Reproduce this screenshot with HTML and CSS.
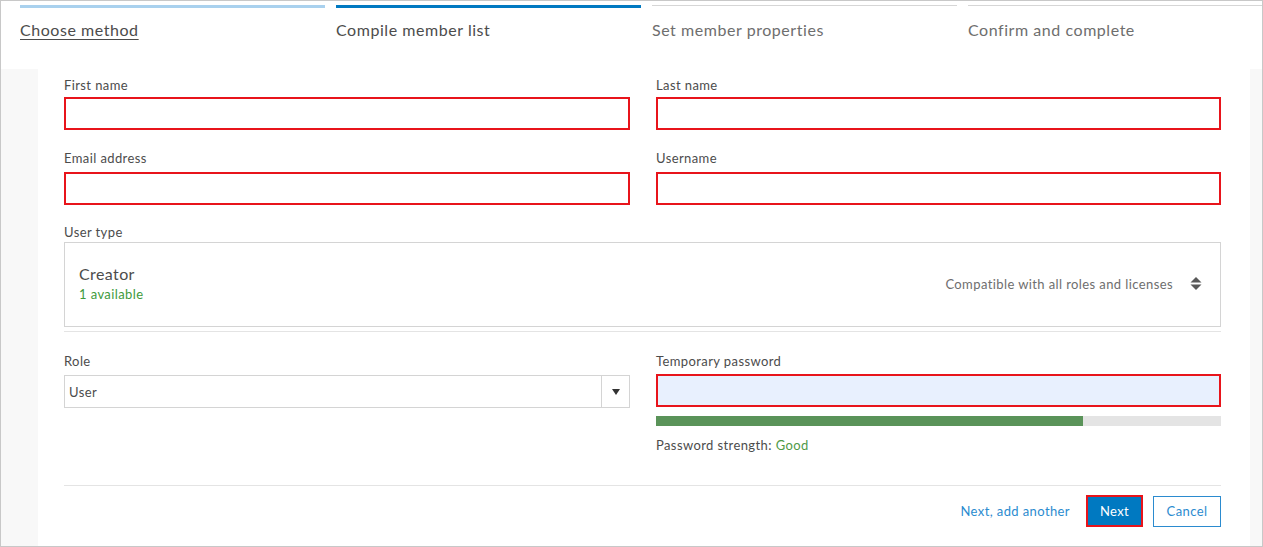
FILE: index.html
```html
<!DOCTYPE html>
<html lang="en">
<head>
<meta charset="utf-8">
<title>Add members</title>
<link rel="stylesheet" href="styles.css">
</head>
<body>
<div class="frame">
  <header class="steps">
    <div class="step step-done"><span class="step-bar"></span><a class="step-label" href="#">Choose method</a></div>
    <div class="step step-active"><span class="step-bar"></span><span class="step-label">Compile member list</span></div>
    <div class="step"><span class="step-bar"></span><span class="step-label">Set member properties</span></div>
    <div class="step step-last"><span class="step-bar"></span><span class="step-label">Confirm and complete</span></div>
  </header>
  <div class="body">
    <div class="gutter"></div>
    <main class="panel">
      <div class="grid">
        <div class="field">
          <label class="label">First name</label>
          <div class="input marked"></div>
        </div>
        <div class="field">
          <label class="label">Last name</label>
          <div class="input marked"></div>
        </div>
        <div class="field row2">
          <label class="label">Email address</label>
          <div class="input marked"></div>
        </div>
        <div class="field row2">
          <label class="label">Username</label>
          <div class="input marked"></div>
        </div>
      </div>

      <div class="field usertype-field">
        <label class="label">User type</label>
        <div class="usertype">
          <div class="ut-left">
            <div class="ut-name">Creator</div>
            <div class="ut-avail">1 available</div>
          </div>
          <div class="ut-right">
            <span class="ut-compat">Compatible with all roles and licenses</span>
            <svg class="updown" width="12" height="15" viewBox="0 0 12 15" aria-hidden="true">
              <path d="M6 1 L11.5 6.5 H0.5 Z" fill="#595959"/>
              <path d="M6 14 L11.5 8.5 H0.5 Z" fill="#595959"/>
            </svg>
          </div>
        </div>
        <div class="ut-shadow"></div>
      </div>

      <div class="grid grid-bottom">
        <div class="field">
          <label class="label">Role</label>
          <div class="select">
            <span class="select-value">User</span>
            <span class="select-arrow"><svg width="8" height="6" viewBox="0 0 8 6" aria-hidden="true"><path d="M0 0 H8 L4 6 Z" fill="#333"/></svg></span>
          </div>
        </div>
        <div class="field">
          <label class="label">Temporary password</label>
          <div class="input marked autofill"></div>
          <div class="strength"><div class="strength-fill" style="width:75.5%"></div></div>
          <div class="strength-text">Password strength: <span class="good">Good</span></div>
        </div>
      </div>

      <footer class="actions">
        <a class="link-btn" href="#">Next, add another</a>
        <button class="btn btn-primary marked-btn" type="button">Next</button>
        <button class="btn btn-secondary" type="button">Cancel</button>
      </footer>
    </main>
    <div class="gutter-right"></div>
  </div>
</div>
</body>
</html>
```

FILE: styles.css
```css
* { box-sizing: border-box; }

html, body {
  margin: 0;
  padding: 0;
  background: #ffffff;
}

body {
  font-family: "Lato", "Open Sans", "Liberation Sans", sans-serif;
  color: #4c4c4c;
  letter-spacing: 0.4px;
}

.frame {
  width: 1263px;
  height: 547px;
  border: 1px solid #c8c8c8;
  background: #f8f8f8;
  display: flex;
  flex-direction: column;
  overflow: hidden;
}

/* Steps header */
.steps {
  height: 68px;
  flex: none;
  background: #ffffff;
  display: flex;
  padding-left: 19px;
  gap: 11px;
}

.step {
  width: 305px;
  display: flex;
  flex-direction: column;
}

.step-last {
  flex: 1;
  width: auto;
}

.step-bar {
  display: block;
  height: 3px;
  margin-top: 4px;
  border-top: 1px solid #d6d6d6;
}

.step-done .step-bar {
  background: #a9d1ee;
  border-top: none;
}

.step-active .step-bar {
  background: #0079c1;
  border-top: none;
}

.step-label {
  margin-top: 12px;
  font-size: 16px;
  line-height: 20px;
  letter-spacing: 0.55px;
  color: #6e6e6e;
  text-decoration: none;
}

.step-done .step-label {
  color: #4c4c4c;
  text-decoration: underline;
  text-underline-offset: 3px;
  align-self: flex-start;
}

.step-active .step-label {
  color: #4c4c4c;
}

/* Body */
.body {
  flex: 1;
  display: flex;
}

.gutter {
  width: 37px;
  flex: none;
}

.gutter-right {
  width: 12px;
  flex: none;
}

.panel {
  flex: 1;
  background: #ffffff;
  padding: 8px 29px 0 26px;
  display: flex;
  flex-direction: column;
}

.grid {
  display: grid;
  grid-template-columns: 566px 1fr;
  column-gap: 26px;
}

.field {
  display: flex;
  flex-direction: column;
}

.row2 {
  margin-top: 20px;
}

.label {
  font-size: 13px;
  line-height: 16px;
  color: #4c4c4c;
  margin-bottom: 4px;
}

.row2 .label {
  margin-bottom: 6px;
}

.input {
  height: 33px;
  border: 1px solid #cccccc;
  background: #ffffff;
}

.marked {
  border: 2px solid #e8141b;
}

.autofill {
  background: #e8f0fe;
  margin-top: 1px;
}

/* User type */
.usertype-field {
  margin-top: 19px;
}

.usertype-field .label {
  margin-bottom: 2px;
}

.usertype {
  height: 85px;
  border: 1px solid #d4d4d4;
  display: flex;
  align-items: center;
  justify-content: space-between;
  padding: 0 18px 0 14px;
}

.ut-left {
  display: flex;
  flex-direction: column;
  margin-top: -2px;
}

.ut-name {
  font-size: 16px;
  line-height: 20px;
  color: #4c4c4c;
}

.ut-avail {
  font-size: 13px;
  line-height: 18px;
  color: #3e9a3b;
  margin-top: 1px;
}

.ut-right {
  display: flex;
  align-items: center;
  gap: 17px;
  margin-top: -2px;
}

.ut-compat {
  font-size: 13px;
  color: #6e6e6e;
}

.updown {
  display: block;
}

.ut-shadow {
  height: 5px;
  border-bottom: 1px solid #e4e4e4;
}

/* Role / password */
.grid-bottom {
  margin-top: 21px;
}

.select {
  height: 33px;
  border: 1px solid #d4d4d4;
  display: flex;
  align-items: center;
  margin-top: 2px;
}

.select-value {
  flex: 1;
  padding-left: 4px;
  font-size: 13px;
  color: #4c4c4c;
}

.select-arrow {
  width: 28px;
  height: 100%;
  border-left: 1px solid #d4d4d4;
  display: flex;
  align-items: center;
  justify-content: center;
}

.strength {
  height: 10px;
  margin-top: 9px;
  background: #e4e4e4;
}

.strength-fill {
  height: 100%;
  background: #5a9359;
}

.strength-text {
  margin-top: 11px;
  font-size: 13px;
  line-height: 16px;
  color: #4c4c4c;
}

.good {
  color: #4f9a48;
}

/* Footer */
.actions {
  margin-top: 32px;
  border-top: 1px solid #e4e4e4;
  padding-top: 9px;
  display: flex;
  justify-content: flex-end;
  align-items: center;
  gap: 10px;
}

.link-btn {
  font-size: 13px;
  color: #2b8bcf;
  text-decoration: none;
  margin-right: 6px;
}

.btn {
  font-family: inherit;
  font-size: 13px;
  letter-spacing: 0.4px;
  height: 31px;
  padding: 0 14px;
  cursor: pointer;
}

.btn-primary {
  background: #0079c1;
  color: #ffffff;
  border: 1px solid #0079c1;
  height: 32px;
  width: 57px;
  padding: 0;
}

.marked-btn {
  border: 2px solid #e8141b;
}

.btn-secondary {
  background: #ffffff;
  color: #2b8bcf;
  border: 1px solid #2b8bcf;
  width: 68px;
  padding: 0;
}
```
